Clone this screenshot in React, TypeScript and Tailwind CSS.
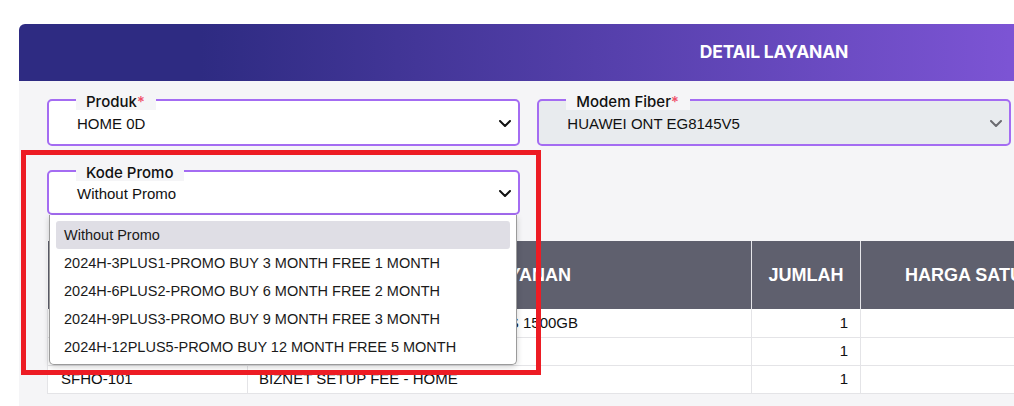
import React from "react";

const Chevron = ({ color = "#111" }: { color?: string }) => (
  <svg width="12" height="7" viewBox="0 0 12 7" fill="none">
    <path d="M1 1l5 5 5-5" stroke={color} strokeWidth="2" strokeLinecap="round" strokeLinejoin="round" />
  </svg>
);

const Field = ({
  label,
  required,
  value,
  disabled,
  h,
  children,
}: {
  label: string;
  required?: boolean;
  value: string;
  disabled?: boolean;
  h: string;
  children?: React.ReactNode;
}) => (
  <div className="relative">
    <div
      className={`${h} rounded-[5px] border-2 border-[#a46cf2] ${
        disabled ? "bg-[#e8ebee]" : "bg-white"
      } flex items-center pl-[28px] pr-[7px] pt-[4px]`}
    >
      <span className="flex-1 text-[15px] text-[#111] font-['Liberation_Sans',Arial,sans-serif]">{value}</span>
      <span className="mb-[2px] flex">
        <Chevron color={disabled ? "#6b6b70" : "#111"} />
      </span>
    </div>
    <div className="absolute left-[29px] top-[-6px] h-[17px] bg-[#f5f5f7] pl-[10px] pr-[11px] flex items-center text-[15px] font-medium text-[#111] font-['Inter',sans-serif] leading-none">
      {label}
      {required && <span className="text-[#f0506a]">*</span>}
    </div>
    {children}
  </div>
);

const promos = [
  "Without Promo",
  "2024H-3PLUS1-PROMO BUY 3 MONTH FREE 1 MONTH",
  "2024H-6PLUS2-PROMO BUY 6 MONTH FREE 2 MONTH",
  "2024H-9PLUS3-PROMO BUY 9 MONTH FREE 3 MONTH",
  "2024H-12PLUS5-PROMO BUY 12 MONTH FREE 5 MONTH",
];

const rows = [
  ["HOME-0D", "BIZNET HOME 0D - UP TO 100 MBPS 1500GB", "1"],
  ["ONT-EG8145V5", "HUAWEI ONT EG8145V5", "1"],
  ["SFHO-101", "BIZNET SETUP FEE - HOME", "1"],
];

export default function App() {
  return (
    <div className="relative w-[1014px] h-[406px] overflow-hidden bg-white">
      <div className="pt-[24px] pl-[19px]">
        <div className="w-[1510px]">
          <div className="h-[57px] rounded-tl-[6px] rounded-tr-[6px] bg-[linear-gradient(90deg,#2e2b82_12%,#7c54d4_65.6%,#a06af2_100%)] flex items-center justify-center">
            <span className="text-white text-[17.5px] font-bold font-['Inter',sans-serif] tracking-[-0.2px]">
              DETAIL LAYANAN
            </span>
          </div>
          <div className="bg-[#f5f5f7] px-[28px] pt-[18px] pb-[40px]">
            <div className="grid grid-cols-3 gap-x-[17px] gap-y-[24px]">
              <Field label="Produk" required value="HOME 0D" h="h-[47px]" />
              <Field label="Modem Fiber" required value="HUAWEI ONT EG8145V5" disabled h="h-[47px]" />
              <div />
              <Field label="Kode Promo" value="Without Promo" h="h-[45px]">
                <div className="absolute left-[2px] top-[45px] z-20 w-[468px] h-[150px] bg-white border border-t-0 border-[#9b9b9b] rounded-b-[5px] shadow-[0_2px_6px_rgba(0,0,0,0.18)] px-[6px] pt-[6px] font-['Liberation_Sans',Arial,sans-serif] text-[14.5px] text-[#1a1a1a]">
                  {promos.map((p, i) => (
                    <div
                      key={p}
                      className={`h-[28px] flex items-center pl-[8px] pt-[1px] rounded-[3px] ${
                        i === 0 ? "bg-[#dfdee5]" : ""
                      }`}
                    >
                      {p}
                    </div>
                  ))}
                </div>
              </Field>
            </div>
            <div className="mt-[26px] bg-white">
              <table className="table-fixed border-collapse w-[1454px] font-['Liberation_Sans',Arial,sans-serif]">
                <colgroup>
                  <col className="w-[200px]" />
                  <col className="w-[504px]" />
                  <col className="w-[109px]" />
                  <col className="w-[233px]" />
                  <col />
                </colgroup>
                <thead>
                  <tr className="h-[68px] bg-[#5f606e] text-white text-[18px] font-bold">
                    <th className="border-r border-[#e6e6ea] text-center">KODE</th>
                    <th className="border-r border-[#e6e6ea] text-center">NAMA LAYANAN</th>
                    <th className="border-r border-[#e6e6ea] text-center">JUMLAH</th>
                    <th className="border-r border-[#e6e6ea] text-center">HARGA SATUAN</th>
                    <th className="text-center">TOTAL HARGA</th>
                  </tr>
                </thead>
                <tbody>
                  {rows.map((r) => (
                    <tr key={r[0]} className="h-[28px] text-[15px] text-[#111] border-b border-[#e4e4e7]">
                      <td className="pl-[13px] border-r border-l border-[#e4e4e7]">{r[0]}</td>
                      <td className="pl-[11px] border-r border-[#e4e4e7] whitespace-nowrap">{r[1]}</td>
                      <td className="pr-[12px] text-right border-r border-[#e4e4e7]">{r[2]}</td>
                      <td className="border-r border-[#e4e4e7]"></td>
                      <td></td>
                    </tr>
                  ))}
                </tbody>
              </table>
            </div>
          </div>
        </div>
      </div>
      <div className="absolute left-[21px] top-[150px] w-[520px] h-[225px] border-[5px] border-[#ed1c24] z-30 pointer-events-none" />
    </div>
  );
}
